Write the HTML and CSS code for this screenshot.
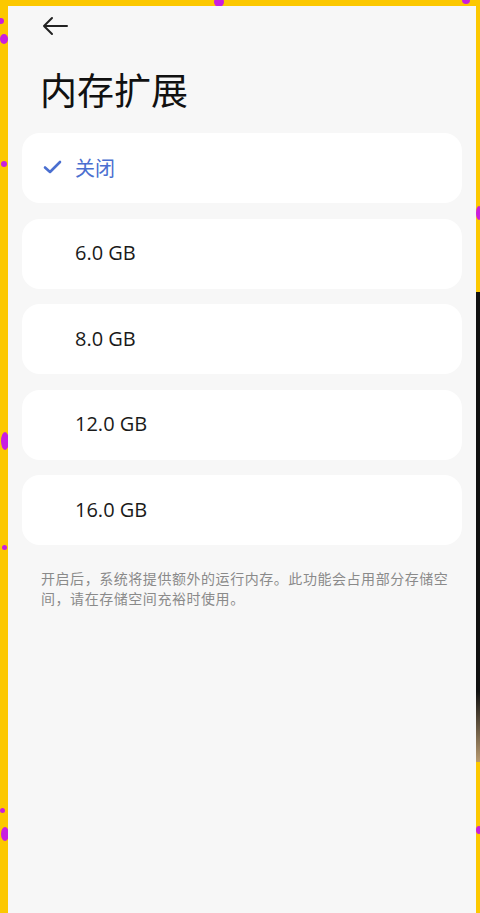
FILE: index.html
```html
<!DOCTYPE html>
<html lang="zh-CN">
<head>
    <meta charset="UTF-8">
    <meta name="viewport" content="width=device-width, initial-scale=1.0">
    <title>内存扩展</title>
    <link rel="stylesheet" href="styles.css">
</head>
<body>
    <div class="frame">
        <!-- decoration on the yellow border -->
        <span class="dot" style="left: 214px; top: -3px; width: 10px; height: 10px;"></span>
        <span class="dot" style="left: 462px; top: -4px; width: 8px; height: 8px;"></span>
        <span class="dot" style="left: -2px; top: 18px; width: 6px; height: 6px;"></span>
        <span class="dot" style="left: 0px; top: 34px; width: 8px; height: 10px;"></span>
        <span class="dot" style="left: 1px; top: 161px; width: 6px; height: 6px;"></span>
        <span class="dot" style="left: 1px; top: 432px; width: 8px; height: 18px;"></span>
        <span class="dot" style="left: 2px; top: 545px; width: 5px; height: 5px;"></span>
        <span class="dot" style="left: 0px; top: 808px; width: 5px; height: 5px;"></span>
        <span class="dot" style="left: 1px; top: 827px; width: 8px; height: 14px;"></span>
        <span class="dot" style="left: 476px; top: 206px; width: 6px; height: 14px;"></span>
        <span class="dot" style="left: 476px; top: 826px; width: 6px; height: 8px;"></span>
        <span class="edge"></span>

        <div class="screen">
            <div class="topbar">
                <svg class="back" width="28" height="20" viewBox="0 0 28 20">
                    <path d="M26 10H3M11 2L3 10l8 8" fill="none" stroke="#222" stroke-width="2" stroke-linecap="round" stroke-linejoin="round"/>
                </svg>
            </div>

            <h1 class="title">内存扩展</h1>

            <div class="options">
                <div class="option selected">
                    <svg class="check" width="19" height="14" viewBox="0 0 19 14">
                        <path d="M2 7.5l5 4.5L17 2" fill="none" stroke="#4a6fd0" stroke-width="2.6" stroke-linecap="round" stroke-linejoin="round"/>
                    </svg>
                    <span>关闭</span>
                </div>
                <div class="option"><span>6.0 GB</span></div>
                <div class="option"><span>8.0 GB</span></div>
                <div class="option"><span>12.0 GB</span></div>
                <div class="option"><span>16.0 GB</span></div>
            </div>

            <p class="note">开启后，系统将提供额外的运行内存。此功能会占用部分存储空间，请在存储空间充裕时使用。</p>
        </div>
    </div>
</body>
</html>
```

FILE: styles.css
```css
body {
    margin: 0;
    font-family: "Noto Sans CJK SC", "Noto Sans", sans-serif;
    background-color: #fcc800;
}
.frame {
    position: relative;
    padding: 6px 4px 0 8px;
    height: 907px;
    overflow: hidden;
}
.dot {
    position: absolute;
    border-radius: 50%;
    background-color: #c81ee0;
}
.edge {
    position: absolute;
    right: 0;
    top: 292px;
    width: 4px;
    height: 470px;
    background: linear-gradient(to bottom, #111 0%, #111 85%, #b89a70 100%);
}
.screen {
    position: relative;
    height: 907px;
    background-color: #f7f7f7;
}
.topbar {
    padding: 10px 0 0 33px;
    height: 20px;
}
.back {
    display: block;
}
.title {
    margin: 30px 0 0 32px;
    font-size: 37px;
    line-height: 46px;
    font-weight: 400;
    color: #111;
}
.options {
    display: flex;
    flex-direction: column;
    gap: 15.5px;
    margin: 21px 14px 0 14px;
}
.option {
    display: flex;
    align-items: center;
    height: 70px;
    padding-left: 53px;
    padding-bottom: 2px;
    box-sizing: border-box;
    background-color: #fff;
    border-radius: 18px;
    font-family: "Open Sans", "Noto Sans CJK SC", sans-serif;
    font-size: 20px;
    color: #1a1a1a;
}
.option.selected {
    padding-left: 21px;
    color: #4a6fd0;
}
.check {
    margin-right: 13px;
}
.note {
    margin: 23px 24px 0 33px;
    font-size: 14px;
    line-height: 20px;
    letter-spacing: 0.55px;
    color: #8a8a8a;
}
```
